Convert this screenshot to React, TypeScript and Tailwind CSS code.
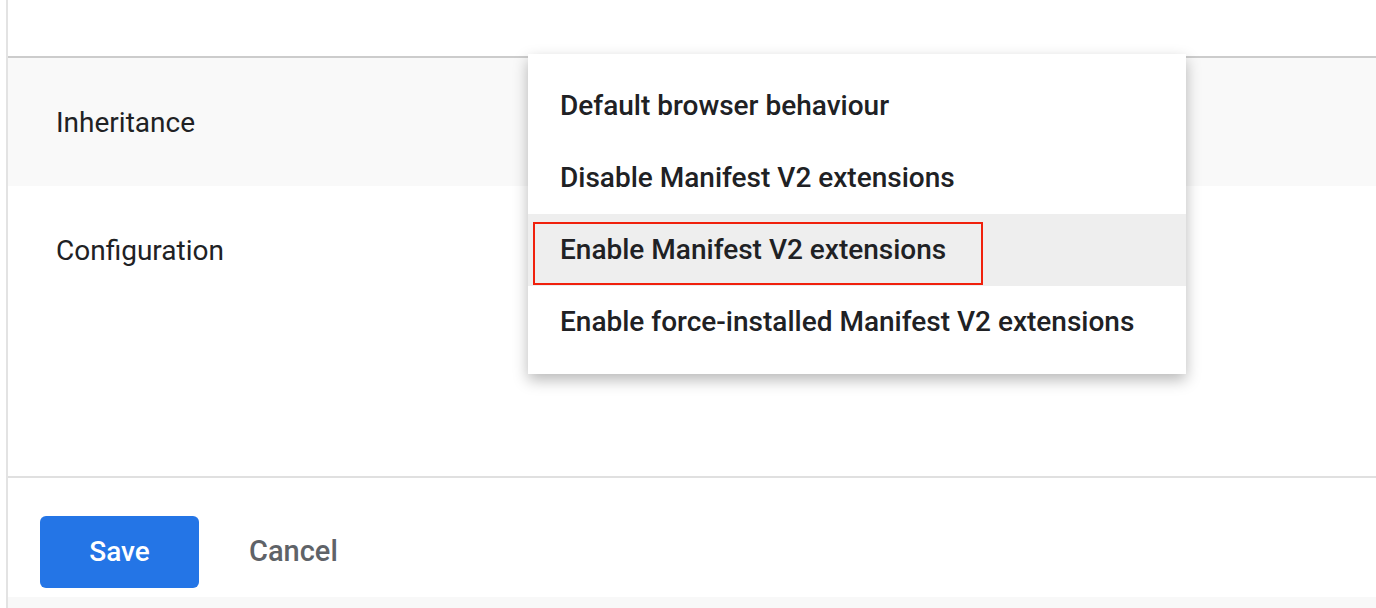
export default function App() {
    const items = [
        "Default browser behaviour",
        "Disable Manifest V2 extensions",
        "Enable Manifest V2 extensions",
        "Enable force-installed Manifest V2 extensions",
    ];

    return (
        <div className="relative w-[1376px] h-[608px] overflow-hidden bg-white flex font-['Roboto',sans-serif] text-[#202124]">
            <div className="w-[6px] shrink-0 bg-white" />
            <div className="flex-1 flex flex-col border-l-2 border-[#e3e3e3]">
                <div className="h-[58px] shrink-0 border-b-2 border-[#cccccc]" />
                <div className="h-[128px] shrink-0 bg-[#f9f9f9] flex items-center pl-[48px] pt-[2px] text-[28px]">
                    {"Inheritance"}
                </div>
                <div className="h-[292px] shrink-0 pl-[48px] pt-[44px] text-[28px] border-b-2 border-[#e0e0e0]">
                    {"Configuration"}
                </div>
                <div className="h-[119px] shrink-0 flex items-start gap-[50px] pl-[32px] pt-[38px]">
                    <button className="w-[159px] h-[72px] rounded-[6px] bg-[#2475e6] text-white text-[28px] font-medium">
                        {"Save"}
                    </button>
                    <button className="h-[72px] text-[29px] font-medium text-[#5f6368]">
                        {"Cancel"}
                    </button>
                </div>
                <div className="flex-1 bg-[#f8f8f8]" />
            </div>

            <div className="absolute left-[528px] top-[54px] w-[658px] bg-white py-[16px] shadow-[0_6px_14px_rgba(0,0,0,0.28)]">
                <ul>
                    {items.map((item, i) => (
                        <li
                            key={item}
                            className={
                                i === 2
                                    ? "relative h-[72px] flex items-center pl-[32px] text-[28px] font-medium bg-[#eeeeee]"
                                    : "relative h-[72px] flex items-center pl-[32px] text-[28px] font-medium"
                            }
                        >
                            {item}
                            {i === 2 && (
                                <div className="absolute left-[5px] top-[8px] w-[450px] h-[63px] border-2 border-[#f0200c]" />
                            )}
                        </li>
                    ))}
                </ul>
            </div>
        </div>
    );
}
